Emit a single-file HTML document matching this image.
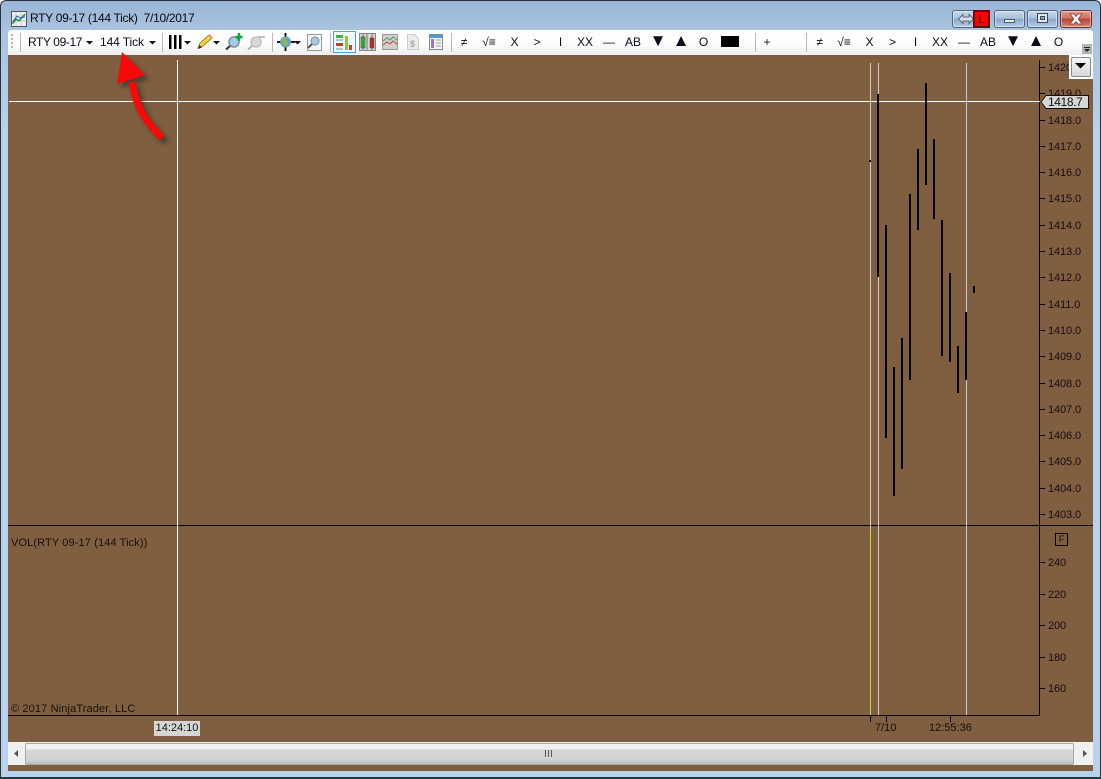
<!DOCTYPE html>
<html><head><meta charset="utf-8">
<style>
html,body{margin:0;padding:0;width:1101px;height:779px;overflow:hidden;background:#fff}
*{box-sizing:border-box}
#frame{position:absolute;left:0;top:0;width:1101px;height:779px;background:linear-gradient(180deg,#9ab6d6 0,#a9c3e0 30px,#b9d1ea 130px,#b9d1ea 100%);border:1px solid #2b3338;border-radius:6px 6px 0 0;border-bottom:2px solid #1d3a44}
.a{position:absolute}
.t{position:absolute;font-family:"Liberation Sans",sans-serif;white-space:nowrap;color:#000}
.tb{font-size:12px;line-height:14px;top:35px;text-align:center;color:#0b0b1a}
.tri{font-size:17px;top:34px}
.p{font-size:11px;line-height:12px;left:1048px;color:#1d0a14;letter-spacing:-.1px;margin-top:1px}
.l{position:absolute;background:#000}
.b{position:absolute;width:2px;background:#000}
.tick{position:absolute;left:1039px;width:6px;height:1px;background:#000}
.sep{position:absolute;top:33px;width:1px;height:19px;background:#b8b8b8}
.wb{position:absolute;top:10px;height:18px;border:1px solid #4f6680;border-radius:3px;background:linear-gradient(180deg,#c6d8ec 0,#a9c1dc 45%,#8aa8c9 50%,#b5cbe2 100%);box-shadow:inset 0 0 0 1px rgba(255,255,255,.45)}
</style></head><body>
<div id="frame"></div>
<svg class="a" style="left:11px;top:11px" width="16" height="16" viewBox="0 0 16 16"><rect x=".5" y=".5" width="15" height="15" fill="#eef2f6" stroke="#555"/><path d="M1 5H15M1 10H15M5 1V15M10 1V15" stroke="#c4ccd6"/><path d="M1.5 13L5 8L8 10L14 3" fill="none" stroke="#2c8a3a" stroke-width="1.4"/><path d="M1.5 11L6 5L9 7L14 6" fill="none" stroke="#2f5fc0" stroke-width="1"/></svg>
<div class="t" style="left:30px;top:11px;font-size:12px;line-height:15px;color:#06080e;white-space:pre;letter-spacing:-.3px">RTY 09-17 (144 Tick)  7/10/2017</div>

<div class="wb" style="left:952px;width:38px"></div>
<svg class="a" style="left:958px;top:13px" width="16" height="12" viewBox="0 0 16 12"><path d="M.5 6L5 1.5V4H11V1.5L15.5 6L11 10.5V8H5V10.5Z" fill="#d8dfe8" stroke="#5d6b7a"/></svg>
<div class="a" style="left:973px;top:10px;width:17px;height:18px;background:#f00;border:2px solid #6a0a10"></div>
<div class="t" style="left:973px;top:12px;width:17px;text-align:center;font-size:12px;line-height:14px;color:#300">L</div>
<div class="wb" style="left:994px;width:31px"></div>
<div class="a" style="left:1004px;top:19px;width:11px;height:4px;background:#e8eef4;border:1px solid #4a5a6a"></div>
<div class="wb" style="left:1027px;width:31px"></div>
<div class="a" style="left:1037px;top:13px;width:11px;height:10px;background:#dfe6ee;border:1px solid #3d4c5c"></div>
<div class="a" style="left:1040px;top:16px;width:5px;height:4px;background:#8fa5bd;border:1px solid #3d4c5c"></div>
<div class="wb" style="left:1060px;width:32px;border-color:#6a2a2a;background:linear-gradient(180deg,#e09a8e 0,#cf7466 45%,#b8402e 50%,#d88a78 100%)"></div>
<svg class="a" style="left:1068px;top:13px" width="16" height="12" viewBox="0 0 16 12"><path d="M2 1H6L8 3.5L10 1H14L10.2 6L14 11H10L8 8.5L6 11H2L5.8 6Z" fill="#f2f2f2" stroke="#7c3a30" stroke-width=".7"/></svg>

<!-- toolbar -->
<div class="a" style="left:8px;top:30px;width:1085px;height:25px;background:linear-gradient(180deg,#fff 0,#fdfdfd 55%,#eeeeee 100%);border-radius:3px 3px 0 0"></div>
<svg class="a" style="left:10px;top:33px" width="5" height="18"><g fill="#b4b4b4"><rect x="1" y="1" width="2" height="2"/><rect x="1" y="5" width="2" height="2"/><rect x="1" y="9" width="2" height="2"/><rect x="1" y="13" width="2" height="2"/></g></svg>
<div class="sep" style="left:20px"></div><div class="sep" style="left:162px"></div><div class="sep" style="left:272px"></div><div class="sep" style="left:330px"></div><div class="sep" style="left:451px"></div><div class="sep" style="left:755px"></div><div class="sep" style="left:806px"></div>
<div class="t tb" style="left:28px;letter-spacing:-.4px">RTY 09-17</div>
<div class="t tb" style="left:100px;letter-spacing:-.1px">144 Tick</div>

<svg class="a" style="left:0;top:28px" width="460" height="28" viewBox="0 28 460 28">
<g fill="#111"><path d="M86 41h7l-3.500 3.500zM149 41h7l-3.500 3.500zM184 41h7l-3.500 3.500zM213 41h7l-3.500 3.500zM294 41h7l-3.500 3.500z"/></g>
<g fill="#000"><rect x="169" y="35" width="2.500" height="14"/><rect x="174" y="35" width="2.500" height="14"/><rect x="179" y="35" width="2.500" height="14"/></g>
<path d="M198 48l2-5 9-8 3 3-9 8z" fill="#f6d23a" stroke="#8a6a10" stroke-width=".8"/><path d="M198 49l1.500-4 2.500 2.500z" fill="#333"/><path d="M208 35.500l1.500-1.500 3 3-1.500 1.500z" fill="#e58a8a"/>
<g><circle cx="234" cy="42" r="5" fill="#a9cce6" stroke="#7c8c9a" stroke-width="1.500"/><path d="M230 46l-4 3.500" stroke="#333" stroke-width="2"/><path d="M239 33v8M235.500 37h7" stroke="#0aa83c" stroke-width="2.500"/></g>
<g opacity=".9"><circle cx="256" cy="42" r="5" fill="#d4d4d4" stroke="#bbb" stroke-width="1.500"/><path d="M252 46l-4 3.500" stroke="#aaa" stroke-width="2"/><path d="M258 37h7" stroke="#bbb" stroke-width="2"/></g>
<g><path d="M285.500 33v18M277 42h18" stroke="#000" stroke-width="1.800"/><circle cx="285.500" cy="42" r="5.500" fill="#5f9fd8"/><path d="M282 39c2-2 4-2 5 0-1 2 1 4 2 5-2 3-5 2-6.500 0z" fill="#8fb84a"/></g>
<rect x="307.500" y="34.500" width="14" height="16" fill="#f4f4f4" stroke="#999"/><circle cx="315" cy="41" r="4" fill="#a9cce6" stroke="#8a9aa8" stroke-width="1.200"/><path d="M312 44l-4 4" stroke="#444" stroke-width="1.800"/>
<rect x="333.500" y="31.500" width="22" height="21" fill="#f2f8fe" stroke="#4a9de0"/>
<rect x="336" y="35" width="7" height="3" fill="#3cb83c"/><rect x="336" y="43" width="7" height="3" fill="#e03030"/><path d="M336 40h7M336 49h7" stroke="#888"/><rect x="345" y="36" width="3" height="14" fill="#8cc83c"/><rect x="349" y="45" width="3" height="5" fill="#e03030"/>
<rect x="359.500" y="33.500" width="16" height="17" fill="#d8d8d8" stroke="#888"/><rect x="361" y="37" width="4" height="11" fill="#3cd02c" stroke="#333" stroke-width=".5"/><rect x="370" y="38" width="4" height="10" fill="#e03030" stroke="#333" stroke-width=".5"/><path d="M363 34v16M372 34v16M367 34v16" stroke="#333" stroke-width=".6"/>
<rect x="382.500" y="34.500" width="15" height="15" fill="#cfcfcf" stroke="#999"/><path d="M383 41l4-3 3 2 3-3 4 3" fill="none" stroke="#3c9c5c"/><path d="M383 45l4-3 3 2 3-3 4 3" fill="none" stroke="#d03c3c"/>
<path d="M407.500 34.500h7l4 4v11h-11z" fill="#ececec" stroke="#ccc"/><text x="410" y="47" font-family="Liberation Sans,sans-serif" font-size="9" font-weight="bold" fill="#aaa">$</text>
<rect x="429.500" y="34.500" width="13" height="15" fill="#f4f6f8" stroke="#888"/><rect x="430" y="35" width="12" height="3" fill="#4a9cd8"/><rect x="431" y="39" width="3" height="9" fill="#a070e0"/><path d="M436 40h5M436 43h5M436 46h5" stroke="#99a"/>
</svg>

<div class="t tb" style="left:454px;width:20px">≠</div><div class="t tb" style="left:474px;width:30px">√≡</div><div class="t tb" style="left:504.500px;width:20px">X</div><div class="t tb" style="left:527px;width:20px">&gt;</div><div class="t tb" style="left:550.500px;width:20px">I</div><div class="t tb" style="left:572px;width:26px">XX</div><div class="t tb" style="left:599px;width:20px">—</div><div class="t tb" style="left:620px;width:26px">AB</div><div class="t tb tri" style="left:648px;width:20px">▼</div><div class="t tb tri" style="left:671px;width:20px">▲</div><div class="t tb" style="left:693.500px;width:20px">O</div>
<div class="a" style="left:721px;top:36px;width:18px;height:11px;background:#000"></div>
<div class="t tb" style="left:757px;width:20px">+</div>
<div class="t tb" style="left:809.500px;width:20px">≠</div><div class="t tb" style="left:829px;width:30px">√≡</div><div class="t tb" style="left:859.500px;width:20px">X</div><div class="t tb" style="left:882.500px;width:20px">&gt;</div><div class="t tb" style="left:905.500px;width:20px">I</div><div class="t tb" style="left:927px;width:26px">XX</div><div class="t tb" style="left:954px;width:20px">—</div><div class="t tb" style="left:975px;width:26px">AB</div><div class="t tb tri" style="left:1003px;width:20px">▼</div><div class="t tb tri" style="left:1026px;width:20px">▲</div><div class="t tb" style="left:1048.500px;width:20px">O</div>
<div class="a" style="left:1082px;top:44px;width:10px;height:10px;background:#b4b4b4"></div>
<div class="a" style="left:1084px;top:47px;width:6px;height:1px;background:#222"></div>
<svg class="a" style="left:1084px;top:49px" width="7" height="4"><path d="M0 0h6l-3 3z" fill="#222"/></svg>

<!-- chart -->
<div class="a" style="left:8px;top:55px;width:1085px;height:687px;background:#7f5f40"></div>
<div class="a" style="left:8px;top:765px;width:1085px;height:6px;background:#7f5f40"></div>

<div class="l" style="left:1039px;top:60px;width:1px;height:656px"></div>
<div class="l" style="left:8px;top:525px;width:1085px;height:1px"></div>
<div class="l" style="left:8px;top:715px;width:1032px;height:1px"></div>

<div class="t p" style="top:61px">1420</div><div class="tick" style="top:67px"></div>
<div class="t p" style="top:87px">1419.0</div><div class="tick" style="top:93px"></div>
<div class="t p" style="top:114px">1418.0</div><div class="tick" style="top:120px"></div>
<div class="t p" style="top:140px">1417.0</div><div class="tick" style="top:146px"></div>
<div class="t p" style="top:166px">1416.0</div><div class="tick" style="top:172px"></div>
<div class="t p" style="top:192px">1415.0</div><div class="tick" style="top:198px"></div>
<div class="t p" style="top:219px">1414.0</div><div class="tick" style="top:225px"></div>
<div class="t p" style="top:245px">1413.0</div><div class="tick" style="top:251px"></div>
<div class="t p" style="top:271px">1412.0</div><div class="tick" style="top:277px"></div>
<div class="t p" style="top:298px">1411.0</div><div class="tick" style="top:304px"></div>
<div class="t p" style="top:324px">1410.0</div><div class="tick" style="top:330px"></div>
<div class="t p" style="top:350px">1409.0</div><div class="tick" style="top:356px"></div>
<div class="t p" style="top:377px">1408.0</div><div class="tick" style="top:383px"></div>
<div class="t p" style="top:403px">1407.0</div><div class="tick" style="top:409px"></div>
<div class="t p" style="top:429px">1406.0</div><div class="tick" style="top:435px"></div>
<div class="t p" style="top:455px">1405.0</div><div class="tick" style="top:461px"></div>
<div class="t p" style="top:482px">1404.0</div><div class="tick" style="top:488px"></div>
<div class="t p" style="top:508px">1403.0</div><div class="tick" style="top:514px"></div>
<div class="t p" style="top:556px">240</div><div class="tick" style="top:562px"></div>
<div class="t p" style="top:588px">220</div><div class="tick" style="top:594px"></div>
<div class="t p" style="top:619px">200</div><div class="tick" style="top:625px"></div>
<div class="t p" style="top:651px">180</div><div class="tick" style="top:657px"></div>
<div class="t p" style="top:682px">160</div><div class="tick" style="top:688px"></div>

<div class="a" style="left:1055px;top:533px;width:13px;height:13px;border:1px solid #000"></div>
<div class="t" style="left:1055px;top:533px;width:13px;text-align:center;font-size:9px;line-height:13px;color:#111">F</div>

<!-- session lines -->
<div class="a" style="left:870px;top:63px;width:1px;height:467px;background:#c9ccd2"></div>
<div class="a" style="left:870px;top:530px;width:1px;height:185px;background:#b4ea24"></div>
<div class="a" style="left:878px;top:63px;width:1px;height:652px;background:#c9ccd2"></div>
<div class="a" style="left:966px;top:63px;width:1px;height:652px;background:#c9ccd2"></div>

<!-- crosshair -->
<div class="a" style="left:9px;top:101px;width:1031px;height:1px;background:#fff"></div>
<div class="a" style="left:177px;top:60px;width:1px;height:655px;background:#fff"></div>

<!-- bars -->
<div class="b" style="left:869px;top:160px;height:2px"></div>
<div class="b" style="left:877px;top:94px;height:183px"></div>
<div class="b" style="left:885px;top:225px;height:213px"></div>
<div class="b" style="left:893px;top:367px;height:129px"></div>
<div class="b" style="left:901px;top:338px;height:131px"></div>
<div class="b" style="left:909px;top:194px;height:186px"></div>
<div class="b" style="left:917px;top:149px;height:81px"></div>
<div class="b" style="left:925px;top:83px;height:102px"></div>
<div class="b" style="left:933px;top:139px;height:80px"></div>
<div class="b" style="left:941px;top:220px;height:136px"></div>
<div class="b" style="left:949px;top:273px;height:89px"></div>
<div class="b" style="left:957px;top:346px;height:47px"></div>
<div class="b" style="left:965px;top:312px;height:68px"></div>
<div class="b" style="left:973px;top:286px;height:7px"></div>

<!-- price tag -->
<svg class="a" style="left:1040px;top:95px" width="50" height="15"><path d="M1 7L6 .5H48.500V13.500H6Z" fill="#d6d6d6" stroke="#111"/></svg>
<div class="t" style="left:1048px;top:96px;font-size:12px;line-height:13px;color:#111;letter-spacing:-.4px">1418.7</div>

<!-- dropdown -->
<div class="a" style="left:1069px;top:55px;width:24px;height:24px;background:#fff"></div>
<div class="a" style="left:1071px;top:57px;width:20px;height:20px;background:linear-gradient(180deg,#f6f6f6,#d8d8d8);border:1px solid #7f8a96;border-radius:2px"></div>
<svg class="a" style="left:1075px;top:63px" width="12" height="7"><path d="M0 0h11l-5.500 5.500z" fill="#000"/></svg>

<!-- labels -->
<div class="t" style="left:11px;top:537px;font-size:11px;line-height:13px;color:#1a0f0a;letter-spacing:.12px">VOL(RTY 09-17 (144 Tick))</div>
<div class="t" style="left:11px;top:703px;font-size:11px;line-height:13px;color:#1a0f0a;letter-spacing:.13px">© 2017 NinjaTrader, LLC</div>

<div class="a" style="left:154px;top:721px;width:46px;height:15px;background:#d6d6d6"></div>
<div class="t" style="left:154px;top:722px;width:46px;text-align:center;font-size:11px;line-height:13px;color:#111">14:24:10</div>
<div class="a" style="left:870px;top:716px;width:1px;height:6px;background:#000"></div>
<div class="a" style="left:886px;top:716px;width:1px;height:6px;background:#000"></div>
<div class="a" style="left:950px;top:716px;width:1px;height:6px;background:#000"></div>
<div class="t" style="left:875px;top:722px;font-size:11px;line-height:13px;color:#1a0f0a">7/10</div>
<div class="t" style="left:929px;top:722px;font-size:11px;line-height:13px;color:#1a0f0a">12:55:36</div>

<!-- scrollbar -->
<div class="a" style="left:8px;top:742px;width:1085px;height:23px;background:#f0f0f0"></div>
<div class="a" style="left:25px;top:743px;width:1049px;height:22px;background:linear-gradient(180deg,#f4f4f4 0,#f0f0f0 25%,#d6d6d6 30%,#d2d2d2 80%,#bcbcbc 100%);border:1px solid #a8a8a8;border-radius:2px"></div>
<div class="a" style="left:545px;top:750px;width:7px;height:7px;background:repeating-linear-gradient(90deg,#555 0,#555 1px,transparent 1px,transparent 3px)"></div>
<svg class="a" style="left:14px;top:750px" width="5" height="8"><path d="M4 0v7L0 3.500z" fill="#555"/></svg>
<svg class="a" style="left:1083px;top:750px" width="5" height="8"><path d="M0 0v7L4 3.500z" fill="#555"/></svg>

<!-- arrow -->
<svg class="a" style="left:100px;top:45px" width="90" height="115" viewBox="100 45 90 115">
<defs><filter id="f" x="-30%" y="-30%" width="160%" height="160%"><feGaussianBlur stdDeviation="2.500"/></filter></defs>
<g transform="translate(4,4)" opacity=".55" filter="url(#f)"><path d="M132 82C136 105 142 118 162 138" fill="none" stroke="#222" stroke-width="7"/><path d="M122 52L145 75L117 84Z" fill="#222"/></g>
<path d="M132 82C136 105 142 118 162 138" fill="none" stroke="#f80808" stroke-width="7"/>
<path d="M122 52L145 75L117 84Z" fill="#f80808"/>
</svg>
</body></html>
